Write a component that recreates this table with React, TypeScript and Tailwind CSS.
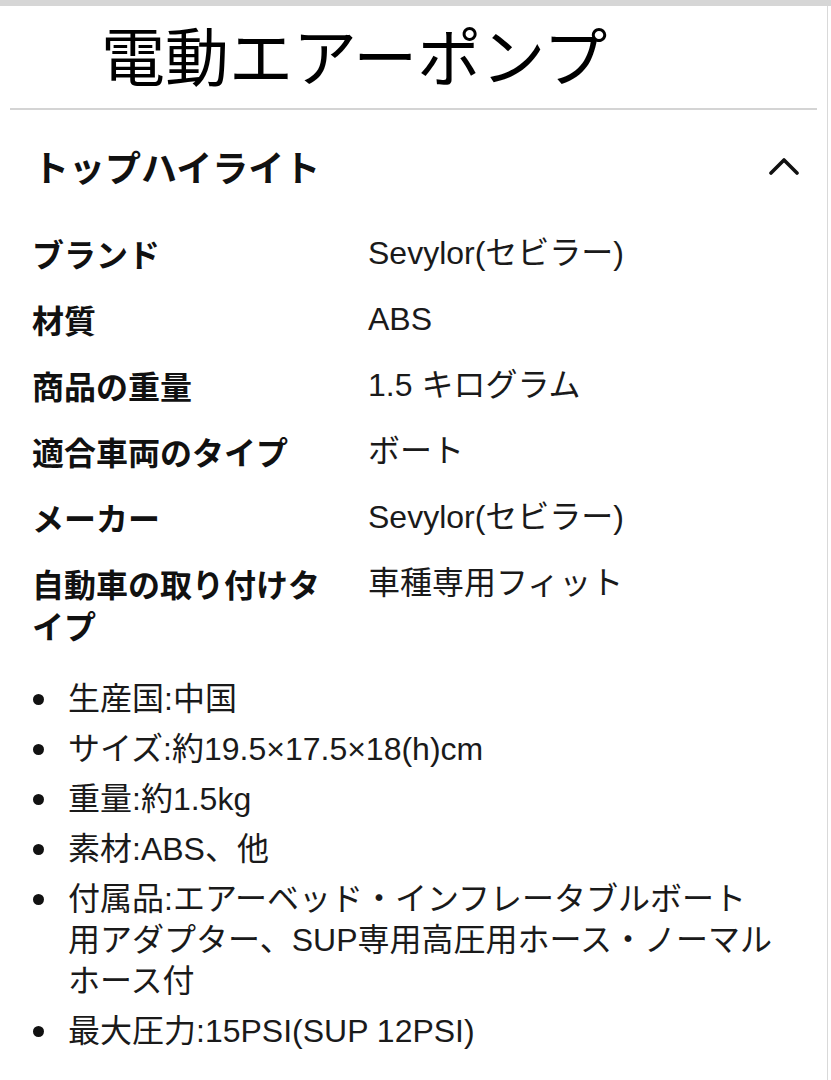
const rows: { label: string; value: string }[] = [
  { label: "ブランド", value: "Sevylor(セビラー)" },
  { label: "材質", value: "ABS" },
  { label: "商品の重量", value: "1.5 キログラム" },
  { label: "適合車両のタイプ", value: "ボート" },
  { label: "メーカー", value: "Sevylor(セビラー)" },
  { label: "自動車の取り付けタイプ", value: "車種専用フィット" },
];

// the source wraps after "ボート", keep that break
const bullets = [
  "生産国:中国",
  "サイズ:約19.5×17.5×18(h)cm",
  "重量:約1.5kg",
  "素材:ABS、他",
  "付属品:エアーベッド・インフレータブルボート\n用アダプター、SUP専用高圧用ホース・ノーマルホース付",
  "最大圧力:15PSI(SUP 12PSI)",
];

const latin = { fontFamily: '"Liberation Sans", "Noto Sans CJK JP", sans-serif' };

const App = () => {
  return (
    <div
      className="w-[831px] min-h-[1080px] bg-white text-[#111111] flex flex-col"
      style={{ fontFamily: '"Noto Sans CJK JP", "Noto Sans", sans-serif' }}
    >
      <div className="h-[6px] bg-[#d6d6d6]" />

      <div className="flex flex-1">
        <main className="w-[827px] flex flex-col pb-[30px]">
          {/* product title */}
          <h1 className="mt-[15px] pl-[101px] text-[64px] leading-[64px] font-normal text-black">
            電動エアーポンプ
          </h1>
          <div className="mt-[23px] mx-[10px] h-[2px] bg-[#d4d4d4]" />

          {/* highlights header */}
          <div className="mt-[36px] flex items-center justify-between pl-[33px] pr-[28px]">
            <h2 className="text-[36px] leading-[40px] font-bold">トップハイライト</h2>
            <svg width="30" height="20" viewBox="0 0 30 20" fill="none">
              <polyline
                points="2,17 15,4 28,17"
                stroke="#111"
                strokeWidth="3.6"
                strokeLinecap="round"
                strokeLinejoin="round"
              />
            </svg>
          </div>

          {/* spec table */}
          <div className="mt-[46px] pl-[32px] flex flex-col gap-[24px]">
            {rows.map((r) => (
              <div key={r.label} className="grid grid-cols-[336px_1fr] text-[32px] leading-[42px]">
                <div className="pr-[34px] font-bold">{r.label}</div>
                <div className="font-normal text-[#1a1a1a]" style={latin}>
                  {r.value}
                </div>
              </div>
            ))}
          </div>

          {/* bullet list */}
          <ul className="mt-[33px] pl-[33px] pr-[45px] flex flex-col gap-[9px]" style={latin}>
            {bullets.map((b) => (
              <li key={b} className="flex text-[32px] leading-[41px] text-[#1a1a1a]">
                <div className="h-[41px] w-[35px] shrink-0 flex items-center">
                  <div className="w-[11px] h-[11px] rounded-full bg-[#111]" />
                </div>
                <span className="flex-1 whitespace-pre-line">{b}</span>
              </li>
            ))}
          </ul>
        </main>
        <div className="w-[1px] bg-[#d9d9d9]" />
      </div>
    </div>
  );
};

export default App;
